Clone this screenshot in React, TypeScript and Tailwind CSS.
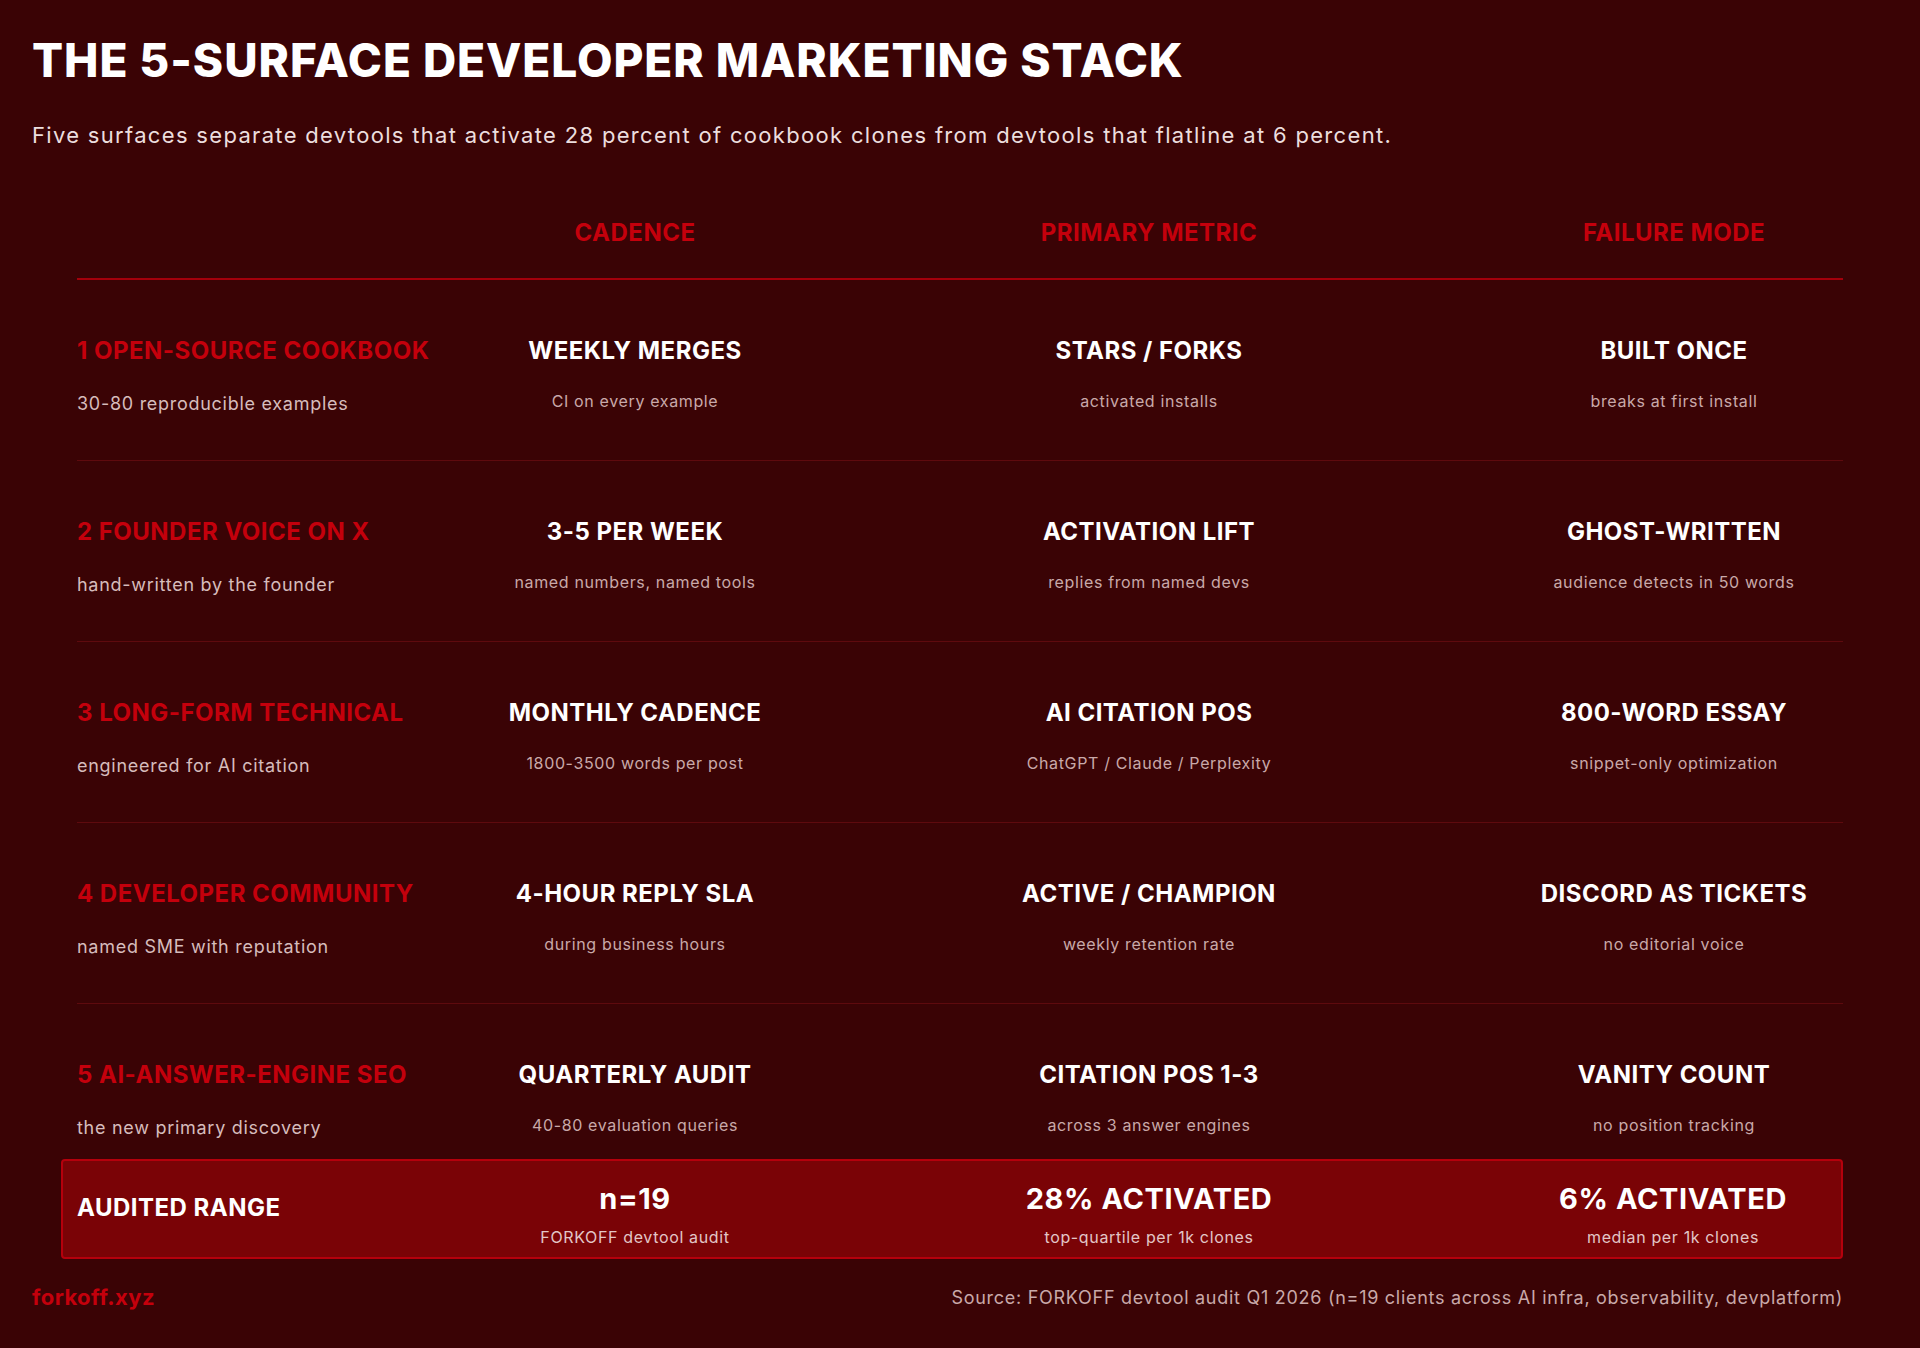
import React from 'react';

const rows = [
  ['1 OPEN-SOURCE COOKBOOK', '30-80 reproducible examples', 'WEEKLY MERGES', 'CI on every example', 'STARS / FORKS', 'activated installs', 'BUILT ONCE', 'breaks at first install'],
  ['2 FOUNDER VOICE ON X', 'hand-written by the founder', '3-5 PER WEEK', 'named numbers, named tools', 'ACTIVATION LIFT', 'replies from named devs', 'GHOST-WRITTEN', 'audience detects in 50 words'],
  ['3 LONG-FORM TECHNICAL', 'engineered for AI citation', 'MONTHLY CADENCE', '1800-3500 words per post', 'AI CITATION POS', 'ChatGPT / Claude / Perplexity', '800-WORD ESSAY', 'snippet-only optimization'],
  ['4 DEVELOPER COMMUNITY', 'named SME with reputation', '4-HOUR REPLY SLA', 'during business hours', 'ACTIVE / CHAMPION', 'weekly retention rate', 'DISCORD AS TICKETS', 'no editorial voice'],
  ['5 AI-ANSWER-ENGINE SEO', 'the new primary discovery', 'QUARTERLY AUDIT', '40-80 evaluation queries', 'CITATION POS 1-3', 'across 3 answer engines', 'VANITY COUNT', 'no position tracking'],
];

const grid = 'grid grid-cols-[400px_316px_712px_1fr]';
const font = { fontFamily: 'Inter, "Liberation Sans", sans-serif' };

function Cell({ title, sub }: { title: string; sub: string }) {
  return (
    <div className="flex flex-col items-center text-center">
      <div className="text-[24px] leading-[26px] font-bold text-white tracking-[0.02em]">{title}</div>
      <div className="mt-[27px] text-[16px] leading-[20px] text-[#c9a9a9] tracking-[0.04em]">{sub}</div>
    </div>
  );
}

export default function App() {
  return (
    <div className="w-[1920px] h-[1348px] bg-[#3a0305] px-[32px] pt-[34px]" style={font}>
      <h1 className="text-[46px] leading-[52px] font-extrabold text-white tracking-[0.02em]">THE 5-SURFACE DEVELOPER MARKETING STACK</h1>
      <p className="mt-[35px] text-[22px] leading-[28px] text-[#ecdede] tracking-[0.06em]">
        Five surfaces separate devtools that activate 28 percent of cookbook clones from devtools that flatline at 6 percent.
      </p>

      <div className="ml-[45px] mr-[45px] mt-[69px]">
        <div className={`${grid} pb-[30px] border-b-2 border-[#a3000b]`}>
          <div />
          {['CADENCE', 'PRIMARY METRIC', 'FAILURE MODE'].map((h) => (
            <div key={h} className="text-center text-[24px] leading-[30px] font-bold text-[#c4000c] tracking-[0.02em]">{h}</div>
          ))}
        </div>

        {rows.map((r, i) => (
          <div key={r[0]} className={`${grid} pt-[58px] ${i < 4 ? 'h-[181px] border-b border-[#5e0a0e]' : 'h-[155px]'}`}>
            <div>
              <div className="text-[24px] leading-[26px] font-bold text-[#c4000c] tracking-[0.02em] whitespace-nowrap">{r[0]}</div>
              <div className="mt-[29px] text-[18px] leading-[22px] text-[#d6bcbc] tracking-[0.04em]">{r[1]}</div>
            </div>
            <Cell title={r[2]} sub={r[3]} />
            <Cell title={r[4]} sub={r[5]} />
            <Cell title={r[6]} sub={r[7]} />
          </div>
        ))}
      </div>

      <div className="ml-[29px] mr-[45px] h-[100px] bg-[#7a0306] border-2 border-[#b5000c] rounded-[4px] pl-[14px]">
        <div className={`${grid} pt-[22px]`}>
          <div className="pt-[12px] text-[24px] leading-[26px] font-bold text-white tracking-[0.02em]">AUDITED RANGE</div>
          {[['n=19', 'FORKOFF devtool audit'], ['28% ACTIVATED', 'top-quartile per 1k clones'], ['6% ACTIVATED', 'median per 1k clones']].map(([a, b]) => (
            <div key={a} className="flex flex-col items-center">
              <div className="text-[29px] leading-[32px] font-bold text-white tracking-[0.02em]">{a}</div>
              <div className="mt-[12px] text-[16px] leading-[20px] text-[#e3c6c6] tracking-[0.04em]">{b}</div>
            </div>
          ))}
        </div>
      </div>

      <div className="mt-[22px] mr-[45px] flex items-center justify-between">
        <div className="text-[22px] font-bold text-[#c4000c] tracking-[0.02em]">forkoff.xyz</div>
        <div className="text-[18px] text-[#c9a9a9] tracking-[0.04em]">Source: FORKOFF devtool audit Q1 2026 (n=19 clients across AI infra, observability, devplatform)</div>
      </div>
    </div>
  );
}
